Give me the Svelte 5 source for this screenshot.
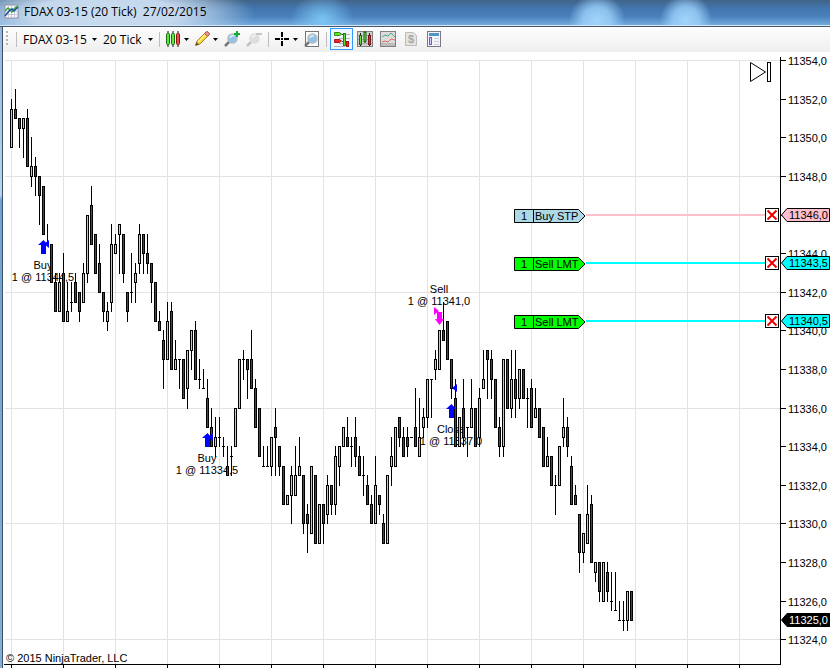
<script>
	const TOP = 11354;
	const TICK_PX = 9.65;
	const LEFT = 8;

	// color, then high / body top / body bottom / low, in ticks below the top price
	const raw = `g4,5,9,9 r3,5,6,6 r6,6,7,9 g6,6,7,10 r5,6,11,11 g8,11,12,13 r10,11,12,14 r12,12,14,17
		r13,13,18,18 r17,19,19,19 r19,19,23,23 r22,23,26,26 g22,23,26,26 r20,22,27,27 g23,26,27,27
		r23,25,25,26 r22,23,25,25 r24,24,26,27 g21,22,25,25 g16,16,22,23 r13,15,19,19 r18,18,22,22
		r19,21,24,24 r24,24,26,27 g25,26,27,28 g17,19,25,26 g18,19,20,20 g17,17,18,22 r18,18,22,23
		r24,24,26,27 r20,24,24,25 g21,22,23,25 g17,18,21,22 r18,18,20,22 r18,20,21,22 r21,21,23,25
		r23,23,27,27 r26,27,28,28 r28,29,31,34 g25,27,31,31 r25,26,32,32 g29,31,32,32 r31,31,31,34
		r31,31,35,35 g30,30,34,36 g28,28,30,32 r27,28,33,33 r31,33,33,34 r32,34,34,34 r33,35,38,38
		r36,38,40,40 g37,39,40,41 r37,39,39,40 r39,40,40,41 r40,42,43,43 r40,41,41,43 g36,36,40,40
		g31,31,36,36 r30,31,31,33 r31,31,32,35 r28,31,34,34 r33,34,38,38 r36,36,41,41 r40,42,42,42
		r40,42,42,42 g39,39,42,43 r36,38,39,43 r40,40,42,43 r42,42,46,46 g45,45,46,46 g42,43,45,48
		g40,43,45,45 g39,42,43,43 r43,43,48,49 r46,47,48,51 g42,42,49,49 r43,43,50,50 g46,46,50,50
		r46,46,48,50 g43,44,47,48 r44,44,46,47 g40,41,46,47 g40,40,42,44 g38,38,40,40 r37,39,40,40
		r39,40,40,42 r37,39,41,42 r40,41,43,43 r41,43,43,45 r43,44,46,46 r45,46,48,48 g41,44,48,48
		r45,45,46,47 r47,48,50,50 g43,43,50,50 g39,41,42,44 g38,38,42,42 r37,37,39,40 r38,39,41,41
		r38,39,40,41 r39,39,39,39 r34,38,40,40 g35,39,41,41 g36,37,38,39 g33,33,37,38 r33,33,33,37
		g30,31,32,33 g28,28,32,32 r25,28,29,29 r27,27,31,31 r31,31,34,35 r33,35,40,40 g37,37,40,40
		r33,36,39,40 r38,38,38,41 g33,36,38,38 r36,36,40,40 g34,35,39,40 g30,33,34,34 r30,30,31,35
		r30,31,33,35 r33,33,38,38 r37,38,40,41 g31,31,40,41 r31,31,36,36 g30,33,36,37 r30,33,35,37
		g32,32,35,36 r32,32,35,35 r34,35,35,38 r33,34,38,38 g34,36,37,37 r36,36,39,39 r38,38,42,42
		g39,41,42,42 r41,41,44,44 r43,44,44,47 g40,40,44,44 g35,38,39,40 r37,38,40,41 r41,42,46,46
		r44,45,46,46 r47,47,51,53 g49,49,51,52 g44,47,50,50 r45,46,52,52 g52,52,53,54 r52,52,55,56
		g52,52,56,56 r52,53,55,56 r53,56,56,57 r53,57,57,57 r56,58,58,58 r56,58,58,59 g55,55,58,59
		r55,55,58,58`;

	const y = (ticks) => Math.round(8.26 + ticks * TICK_PX);
	const priceY = (price) => y((TOP - price) * 2);
	const label = (price) => price.toFixed(1).replace('.', ',');

	const candles = raw.split(/\s+/).map((entry, i) => {
		const [high, top, bottom, low] = entry.slice(1).split(',').map((n) => y(Number(n)));
		return { up: entry[0] === 'g', x: LEFT + i * 4, high, top, bottom, low };
	});

	const columns = Array.from({ length: 40 }, (_, i) => LEFT + i * 52);
	const rows = Array.from({ length: 6 }, (_, i) => TOP - i * 6);
	const prices = Array.from({ length: 16 }, (_, i) => TOP - i * 2);

	const fills = [
		{ x: 40, y: 188, dir: 'up', side: 'left', name: 'Buy', text: '1 @ 11344,5', textY: 217 },
		{ x: 204, y: 381, dir: 'up', side: 'left', name: 'Buy', text: '1 @ 11334,5', textY: 410 },
		{ x: 436, y: 258, dir: 'down', side: 'right', name: 'Sell', text: '1 @ 11341,0', textY: 241 },
		{ x: 448, y: 352, dir: 'up', side: 'far', name: 'Close', text: '1 @ 11337,0', textY: 381 }
	];

	let orders = $state([
		{ id: 1, qty: 1, name: 'Buy STP', price: 11346, kind: 'stop' },
		{ id: 2, qty: 1, name: 'Sell LMT', price: 11343.5, kind: 'limit' },
		{ id: 3, qty: 1, name: 'Sell LMT', price: 11340.5, kind: 'limit' }
	]);
	let traderOpen = $state(true);

	const cancel = (id) => (orders = orders.filter((order) => order.id !== id));
</script>

{#snippet lens()}
	<path d="M1 15l5-5" stroke="#777" stroke-width="2.5" />
	<circle cx="8.5" cy="7.5" r="4.5" fill="#8fc3e8" stroke="#b4bcc4" stroke-width="1.5" />
	<path d="M6 7q1-3 4-2" fill="none" stroke="#d9effc" stroke-width="1.5" />
{/snippet}

{#snippet caret()}
	<svg class="caret" viewBox="0 0 5 3" aria-hidden="true"><path d="M0 0h5L2.5 3z" /></svg>
{/snippet}

<div class="window">
	<header>
		<svg class="icon" viewBox="0 0 16 16" aria-hidden="true">
			<rect x="1" y="1" width="13" height="13" fill="#f6f8fb" stroke="#8c8f9c" />
			<path d="M4.5 1v13M7.5 1v13M10.5 1v13M1 4.5h13M1 7.5h13M1 10.5h13" stroke="#c4c7d6" />
			<path d="M1 7l3-3 4 4 5-6" fill="none" stroke="#38a838" stroke-width="1.5" />
			<path d="M1 12l4-5 3-2 2 2 4-4" fill="none" stroke="#204f9e" stroke-width="1.5" />
		</svg>
		<h1>FDAX 03-15 (20 Tick)&nbsp; 27/02/2015</h1>
	</header>

	<div class="toolbar" role="toolbar" aria-label="Chart">
		<span class="grip"></span>
		<span class="sep"></span>
		<label class="picker instrument">
			<select aria-label="Instrument"><option>FDAX 03-15</option></select>
			{@render caret()}
		</label>
		<label class="picker interval">
			<select aria-label="Interval"><option>20 Tick</option></select>
			{@render caret()}
		</label>
		<span class="sep"></span>
		<div class="group">
			<button aria-label="Chart style">
				<svg class="icon" viewBox="0 0 16 16">
					<path d="M2 0v16M7 0v16M12 0v16" stroke="#111" />
					<rect x=".5" y="2.5" width="3" height="11" rx="1" fill="#5fe83c" stroke="#176b12" />
					<rect x="5.5" y="2.5" width="3" height="11" rx="1" fill="#5fe83c" stroke="#176b12" />
					<rect x="10.5" y="2.5" width="3" height="11" rx="1" fill="#f0504a" stroke="#8c1512" />
				</svg>
				{@render caret()}
			</button>
			<button aria-label="Drawing tools">
				<svg class="icon" viewBox="0 0 16 16">
					<path d="M.5 14.5l1.5-4.5L10.5 1.5l3 3L5 13z" fill="#f9d43b" stroke="#b18a1e" />
					<path d="M3 11l8-8" stroke="#fff09a" stroke-width="1.5" />
					<path d="M9.5 2.5l1.5-1.5q1-1 2 0l1 1q1 1 0 2L12.5 5.500z" fill="#ef9382" stroke="#a85c58" />
					<path d="M.5 14.5l1-3.5 2.5 2.500z" fill="#5a4934" />
				</svg>
				{@render caret()}
			</button>
			<button aria-label="Zoom in">
				<svg class="icon" viewBox="0 0 16 16">
					{@render lens()}
					<path d="M10 3h6M13 0v6" stroke="#0fae2c" stroke-width="2" />
				</svg>
			</button>
			<button aria-label="Zoom out" disabled>
				<svg class="icon faded" viewBox="0 0 16 16">
					{@render lens()}
					<path d="M10 3h6" stroke="#777" stroke-width="2" />
				</svg>
			</button>
		</div>
		<span class="sep"></span>
		<div class="group">
			<button aria-label="Crosshair">
				<svg class="icon" viewBox="0 0 16 16">
					<path d="M0 8h5M9 8h5M7 1v5M7 10v5" stroke="#000" stroke-width="2" shape-rendering="crispEdges" />
					<path d="M6 7h2v2H6z" />
				</svg>
				{@render caret()}
			</button>
			<button aria-label="Zoom to frame">
				<svg class="icon" viewBox="0 0 16 16">
					<rect x="1.5" y=".5" width="13" height="15" fill="#fafafa" stroke="#777" />
					{@render lens()}
				</svg>
			</button>
		</div>
		<span class="sep"></span>
		<div class="group toggles">
			<button aria-label="Chart trader" aria-pressed={traderOpen} onclick={() => (traderOpen = !traderOpen)}>
				<svg class="icon" viewBox="0 0 16 16">
					<path d="M5 3.5h11M5 7.5h11M5 12.5h11M0 15.5h11" stroke="#b4b4b4" />
					<path d="M8 3.5h3M8 10.5h2" stroke="#333" />
					<path d="M.5 1.5h5l2 1.5-2 1.500h-5z" fill="#66e81a" stroke="#2d8a15" />
					<path d="M.5 8.5h5l2 1.5-2 1.500h-5z" fill="#ee2828" stroke="#a81512" />
					<rect x="9.5" y="2.5" width="2" height="12" fill="#63dd31" stroke="#2d7a15" />
					<rect x="12.5" y="10.5" width="2" height="5" fill="#ee3030" stroke="#a11" />
				</svg>
			</button>
			<button aria-label="Chart bars">
				<svg class="icon" viewBox="0 0 16 16">
					<rect x=".5" y=".5" width="15" height="15" fill="#d0d0d0" stroke="#808080" />
					<path d="M1 4.5h14M1 8.5h14M1 12.5h14" stroke="#aaa" />
					<path d="M3.5 2v13M8 0v12M12.5 2v13" stroke="#222" />
					<rect x="2.5" y="4.5" width="2" height="9" fill="#62e235" stroke="#23641b" />
					<rect x="7" y="1.5" width="2" height="9" fill="#62e235" stroke="#23641b" />
					<rect x="11.5" y="4.5" width="2" height="9" fill="#ee3030" stroke="#7c1717" />
				</svg>
			</button>
			<button aria-label="Indicators">
				<svg class="icon" viewBox="0 0 16 16">
					<rect x=".5" y=".5" width="15" height="15" fill="#dcdcdc" stroke="#808080" />
					<path d="M1 12h14v3H1z" fill="#bcbcbc" />
					<path d="M2 6l3-2 3 1 3-3 4 4" fill="none" stroke="#4ea978" />
					<path d="M2 11l3-1 3 1 3-3 4 1" fill="none" stroke="#e46868" />
				</svg>
			</button>
			<button aria-label="Strategies" disabled>
				<svg class="icon" viewBox="0 0 16 16">
					<path d="M2.5 1.5h8l3 3v10h-11z" fill="#e4e4e4" stroke="#bcbcbc" />
					<text class="dollar" x="8" y="12" text-anchor="middle">$</text>
				</svg>
			</button>
			<button aria-label="Properties">
				<svg class="icon" viewBox="0 0 16 16">
					<rect x="1.5" y=".5" width="13" height="15" fill="#f4f4f8" stroke="#777a86" />
					<path d="M3 2h10v3H3z" fill="#4d98c4" />
					<rect x="3.5" y="6.5" width="2" height="7" fill="#d8caf8" stroke="#7d55d8" />
					<path d="M8 7.5h5M8 10.5h5M8 13.5h5" stroke="#cfd1da" />
				</svg>
			</button>
		</div>
	</div>

	<main>
		<div class="plot">
			<svg class="canvas" role="img" aria-label="FDAX 03-15 candles">
				<g class="grid">
					{#each columns as x}
						<rect {x} y="8" width="1" height="604" />
					{/each}
					{#each rows as price}
						<rect x="2" y={priceY(price)} width="100%" height="1" />
					{/each}
				</g>
				<g class="frame">
					<rect x="1" y="612" width="100%" height="1" />
					{#each columns as x}
						<rect {x} y="612" width="1" height="4" />
					{/each}
				</g>

				{#each fills as fill}
					<text x={fill.x} y={fill.textY} text-anchor="middle">{fill.name}</text>
					<text x={fill.x} y={fill.textY + 12} text-anchor="middle">{fill.text}</text>
				{/each}

				<g class="candles">
					{#each candles as c}
						<rect x={c.x} y={c.high} width="1" height={c.low - c.high + 1} />
						<rect x={c.x - 1} y={c.top} width="3" height={c.bottom - c.top + 1} />
						{#if c.bottom > c.top}
							<rect class={c.up ? 'up' : 'down'} x={c.x} y={c.top + 1} width="1" height={c.bottom - c.top - 1} />
						{/if}
					{/each}
				</g>

				{#each fills as fill}
					<g class={fill.dir} transform={`translate(${fill.x} ${fill.y})`}>
						{#if fill.dir === 'up'}
							<path class="marker" d="M.5 0L5 5H3v9h-5V5h-3z" />
						{:else}
							<path class="marker" d="M-2 2h5v7h2L.5 15l-4.500-6h2z" />
						{/if}
						{#if fill.side === 'left'}
							<path class="marker" d="M1 4l5-4v8z" />
						{:else if fill.side === 'right'}
							<path class="marker" d="M0 1l-5-4v8z" />
						{:else}
							<path class="marker" d="M1-16l5-4v8z" />
						{/if}
					</g>
				{/each}

				<text x="3" y="610">© 2015 NinjaTrader, LLC</text>
			</svg>

			<button class="latest" aria-label="Go to latest bar">
				<svg viewBox="0 0 22 22">
					<path d="M1.5 1.5v19l15-9.500z" />
					<rect x="18.5" y="1.5" width="3" height="19" />
				</svg>
			</button>

			{#if traderOpen}
				{#each orders as order (order.id)}
					<div class={`order ${order.kind}`} style={`top: ${priceY(order.price) - 7}px`}>
						<svg class="tag" viewBox="0 0 72 15">
							<path d="M.5 1.5h64L71 8l-6.500 6.500H.5z" />
							<path d="M19.5 1v14" />
							<text x="10" y="12" text-anchor="middle">{order.qty}</text>
							<text x="21" y="12">{order.name}</text>
						</svg>
						<span class="line"></span>
						<button aria-label={`Cancel ${order.name} ${label(order.price)}`} onclick={() => cancel(order.id)}>
							<svg viewBox="0 0 12 12"><path d="M1.5 1.5l9 9M10.5 1.5l-9 9" /></svg>
						</button>
					</div>
				{/each}
			{/if}
		</div>

		<svg class="axis" role="img" aria-label="Price axis">
			<rect x="0" y="5" width="1" height="608" />
			{#each prices as price}
				<rect x="0" y={priceY(price)} width="6" height="1" />
				<text x="8" y={priceY(price) + 5}>{label(price)}</text>
			{/each}
			{#each orders as order (order.id)}
				<g class={`price ${order.kind}`} transform={`translate(1 ${priceY(order.price) - 7})`}>
					<path d="M.5 7L6 .5h42.500v13H6z" />
					<text x="8" y="11">{label(order.price)}</text>
				</g>
			{/each}
			<g class="price last" transform={`translate(1 ${priceY(11325) - 7})`}>
				<path d="M.5 7L6 .5h43v13H6z" />
				<text x="8" y="11">11325,0</text>
			</g>
		</svg>
	</main>
</div>

<style>
	:global(body) {
		margin: 0;
		background: white;
	}

	.window {
		box-sizing: border-box;
		min-height: 100vh;
		padding-left: 3px;
		background:
			linear-gradient(#3d5068, #3d5068) 2px 0 / 1px 100% no-repeat,
			linear-gradient(#8fb2d4, #b9d5ee 195px, #6da4d2 200px, #86afd3) left / 2px 100% no-repeat;
		color: #000;
		font-family: "Liberation Sans", Arial, sans-serif;
		font-size: 11px;
	}

	header {
		display: flex;
		align-items: center;
		gap: 4px;
		box-sizing: border-box;
		height: 27px;
		margin-left: -3px;
		padding: 0 4px 3px;
		border-bottom: 1px solid #45566b;
		box-shadow: inset 0 -1px #d5e7f8;
		background:
			radial-gradient(ellipse 150px 34px at 105px 14px, #c9dcef, #c4d8ed 50%, #c4d8ed88 75%, transparent),
			radial-gradient(ellipse 32px 26px at 322px 20px, #7cc5f4, #7cc5f499 40%, transparent),
			radial-gradient(ellipse 28px 26px at 597px 20px, #a2d4fb, #9dd2fbcc 50%, transparent),
			radial-gradient(ellipse 26px 26px at 686px 20px, #a2d4fb, #9dd2fbcc 50%, transparent),
			linear-gradient(#426488, #4275ad 30%, #4a82bd 65%, #78b0e2);
	}

	h1 {
		margin: 0;
		font: 12px "Open Sans", "Noto Sans", sans-serif;
		white-space: pre;
	}

	.icon {
		display: block;
		flex: none;
		width: 16px;
		height: 16px;
	}

	.faded {
		opacity: 0.4;
		filter: grayscale(1);
	}

	.dollar {
		font-size: 11px;
		font-weight: bold;
		fill: #a8a8a8;
	}

	.toolbar {
		display: flex;
		align-items: center;
		gap: 6px;
		height: 24px;
		padding: 0 0 1px 3px;
		background: linear-gradient(#fdfdfd, #efefef);
	}

	.grip {
		width: 4px;
		height: 16px;
		background: repeating-linear-gradient(#b5b5b5 0 2px, transparent 2px 4px) left / 2px 100% no-repeat;
	}

	.sep {
		width: 1px;
		height: 15px;
		background: #bdbdbd;
	}

	.picker {
		display: flex;
		align-items: center;
		justify-content: space-between;

		& select {
			appearance: none;
			flex: 1;
			min-width: 0;
			padding: 0;
			border: 0;
			background: none;
			color: inherit;
			font: 12px "Open Sans", "Noto Sans", sans-serif;
		}
	}

	.instrument {
		width: 74px;
	}

	.interval {
		width: 50px;
	}

	.caret {
		flex: none;
		width: 5px;
		height: 3px;
	}

	.group {
		display: flex;
		align-items: center;
		gap: 6px;
	}

	button {
		display: flex;
		align-items: center;
		gap: 2px;
		padding: 0;
		border: 0;
		background: none;
	}

	.toggles {
		gap: 0;
		margin-left: -3px;

		& button {
			box-sizing: border-box;
			justify-content: center;
			width: 23px;
			height: 22px;
		}

		& button[aria-pressed='true'] {
			border: 1px solid #3399ff;
			background: #eef6ff;
		}
	}

	main {
		display: flex;
		background: white;
	}

	.plot {
		position: relative;
		flex: 1;
		min-width: 0;
	}

	.canvas {
		display: block;
		width: 100%;
		height: 616px;
	}

	.grid {
		fill: #e2e2e2;
	}

	.up {
		fill: #90ee90;
	}

	.down {
		fill: #f00000;
	}

	.up .marker {
		fill: #0000ff;
	}

	.down .marker {
		fill: #ff00ff;
	}

	.latest {
		position: absolute;
		top: 9px;
		right: 9px;

		& svg {
			width: 22px;
			height: 22px;
			fill: none;
			stroke: #000;
		}
	}

	.order {
		position: absolute;
		right: 1px;
		left: 511px;
		display: flex;
		align-items: flex-start;

		& button {
			box-sizing: border-box;
			justify-content: center;
			width: 14px;
			height: 14px;
			border: 1px solid #000;
			background: white;
		}

		& button svg {
			flex: none;
			width: 12px;
			height: 12px;
			stroke: #f00000;
			stroke-width: 2;
		}
	}

	.stop {
		--line: #ffc0cb;
		--tag: #add8e6;
	}

	.limit {
		--line: #00ffff;
		--tag: #00ff00;
	}

	.tag {
		flex: none;
		width: 72px;
		height: 15px;

		& path {
			fill: var(--tag);
			stroke: #000;
		}
	}

	.line {
		flex: 1;
		height: 2px;
		margin-top: 6px;
		background: var(--line);
	}

	.axis {
		flex: none;
		width: 50px;
		height: 616px;
	}

	.price path {
		fill: var(--line);
		stroke: #000;
	}

	.last path {
		fill: #000;
	}

	.last text {
		fill: white;
	}
</style>
